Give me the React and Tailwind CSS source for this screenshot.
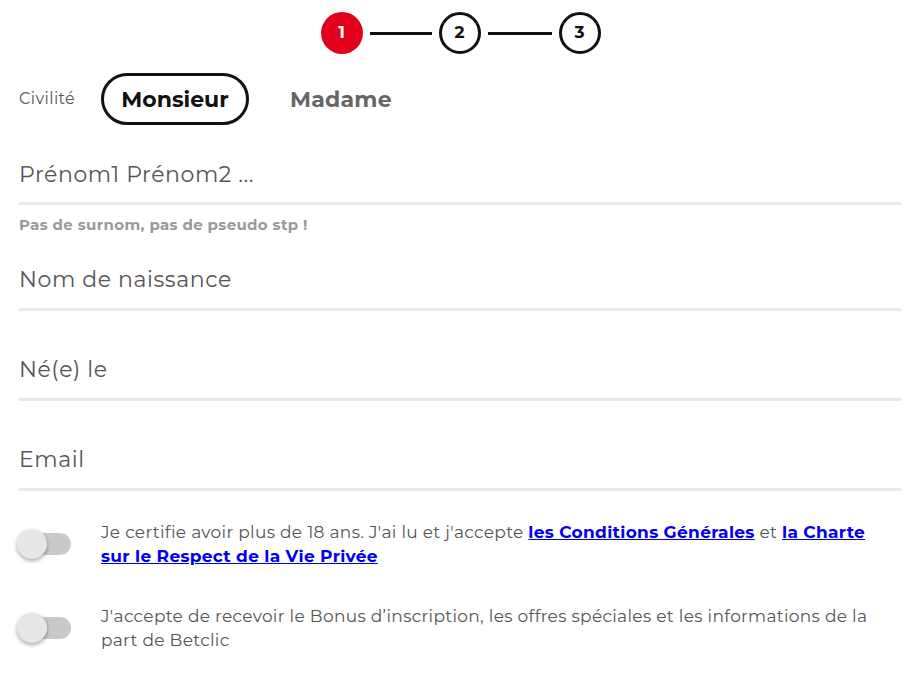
export default function App() {
  const fields = ['Nom de naissance', 'Né(e) le', 'Email']

  const Toggle = () => (
    <div className="relative w-[54px] h-[30px] shrink-0 mt-[9px] ml-[-2px]">
      <div className="absolute left-[2px] right-0 top-[4px] h-[22px] rounded-full bg-[#c9c9c9]" />
      <div className="absolute left-0 top-0 w-[30px] h-[30px] rounded-full bg-[#e6e6e6] shadow-[0_2px_4px_rgba(0,0,0,0.35)]" />
    </div>
  )

  return (
    <div className="w-[922px] h-[688px] bg-white pl-[19px] pr-[21px] font-['Montserrat','Open_Sans',sans-serif] text-[#555]">
      <div className="flex items-center justify-center pt-[12px] pl-[1px]">
        <div className="w-[42px] h-[42px] rounded-full bg-[#e2001a] text-white font-bold text-[17px] flex items-center justify-center">1</div>
        <div className="w-[62px] h-[3px] bg-[#111] mx-[7px]" />
        <div className="w-[42px] h-[42px] rounded-full border-[3px] border-[#111] text-[#111] font-bold text-[17px] flex items-center justify-center">2</div>
        <div className="w-[64px] h-[3px] bg-[#111] mx-[7px]" />
        <div className="w-[42px] h-[42px] rounded-full border-[3px] border-[#111] text-[#111] font-bold text-[17px] flex items-center justify-center">3</div>
      </div>

      <div className="flex items-center mt-[19px]">
        <span className="text-[16px] tracking-[0.4px] text-[#555] w-[82px]">Civilité</span>
        <div className="w-[148px] h-[52px] rounded-full border-[3px] border-[#111] flex items-center justify-center text-[22px] font-bold text-[#111]">Monsieur</div>
        <span className="ml-[41px] text-[22px] tracking-[0.2px] font-bold text-[#666]">Madame</span>
      </div>

      <div className="mt-[21px] border-b-[3px] border-[#e8e8e8] h-[59px] flex items-center text-[22px] tracking-[0.6px] text-[#555]">
        Prénom1 Prénom2 ...
      </div>
      <div className="mt-[9px] text-[15px] tracking-[0.35px] font-bold text-[#999]">Pas de surnom, pas de pseudo stp !</div>

      {fields.map((f, i) => (
        <div
          key={f}
          className={`border-b-[3px] border-[#e8e8e8] flex items-end pb-[12px] text-[22px] tracking-[0.6px] text-[#555] ${i === 0 ? 'h-[74px]' : 'h-[90px]'}`}
        >
          {f}
        </div>
      ))}

      <div className="flex items-start gap-[30px] mt-[29px]">
        <Toggle />
        <p className="w-[785px] text-[17px] leading-[24px] tracking-[0.3px]">
          Je certifie avoir plus de 18 ans. J'ai lu et j'accepte{' '}
          <a href="#" className="text-[#0000ee] font-bold underline">les Conditions Générales</a> et{' '}
          <a href="#" className="text-[#0000ee] font-bold underline">la Charte sur le Respect de la Vie Privée</a>
        </p>
      </div>

      <div className="flex items-start gap-[30px] mt-[36px]">
        <Toggle />
        <p className="w-[785px] text-[17px] leading-[24px] tracking-[0.3px]">
          J'accepte de recevoir le Bonus d’inscription, les offres spéciales et les informations de la part de Betclic
        </p>
      </div>
    </div>
  )
}
